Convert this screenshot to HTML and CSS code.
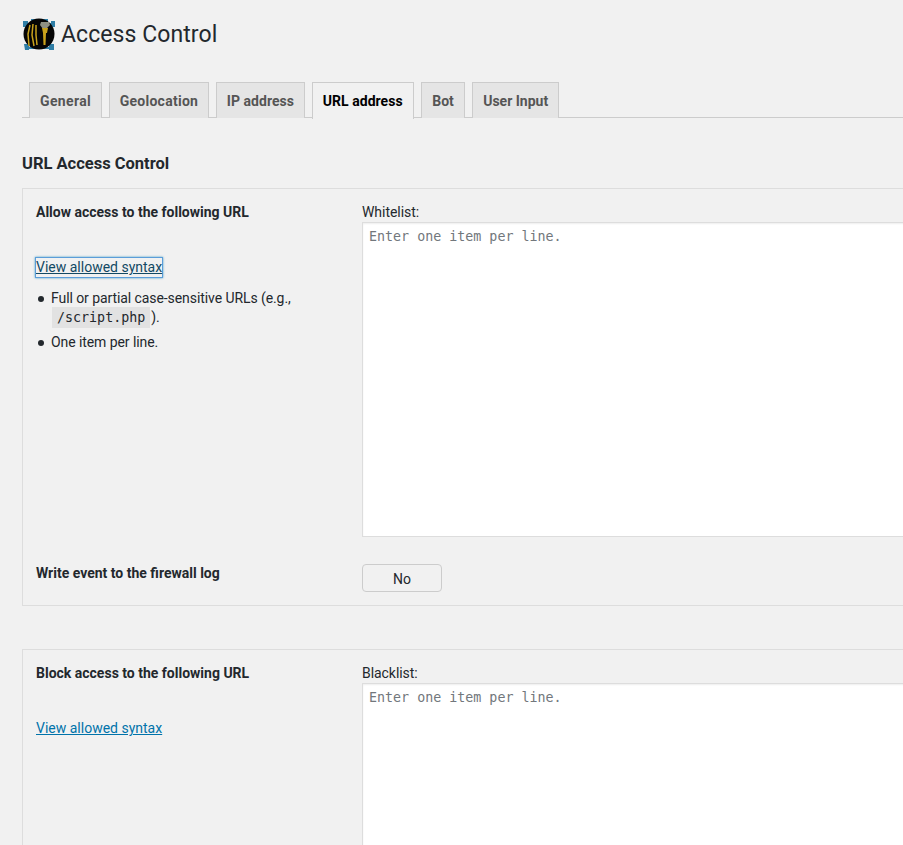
FILE: index.html
```html
<!DOCTYPE html>
<html lang="en">
<head>
    <meta charset="UTF-8">
    <title>Access Control</title>
    <link rel="stylesheet" href="styles.css">
</head>
<body>
    <div class="wrap">
        <h1 class="page-title">
            <svg class="logo" width="34" height="34" viewBox="0 0 34 34">
                <path d="M1 4h5v2h3V2h17v4h3V4h4v6h-4V8H5v2H1zM2 27h5v3h20v-3h5v6h-5v-1H7v1H3z" fill="#2f7ea6"/>
                <circle cx="17" cy="17" r="15.500" fill="#050505"/>
                <path d="M19 5h8l1 3-4 4h-3l-3-4z" fill="#8f9183"/>
                <path d="M20 11h6l-1 5h-1l-.5 12h-2L21 16z" fill="#c9a21c"/>
                <path d="M8 8l-2 9 1 12M11 7l-1 11 2 11M14 8v10l1 10" fill="none" stroke="#c9a21c" stroke-width="1.500"/>
            </svg>
            Access Control
        </h1>

        <nav class="tabs">
            <a class="tab tab-general">General</a>
            <a class="tab tab-geo">Geolocation</a>
            <a class="tab tab-ip">IP address</a>
            <a class="tab active">URL address</a>
            <a class="tab tab-bot">Bot</a>
            <a class="tab">User Input</a>
        </nav>

        <h2 class="section-title">URL Access Control</h2>

        <section class="panel">
            <div class="row">
                <div class="col-left">
                    <h3 class="label">Allow access to the following URL</h3>
                    <a class="syntax-link focused">View allowed syntax</a>
                    <ul class="syntax-list">
                        <li>Full or partial case-sensitive URLs (e.g., <code>/script.php</code>).</li>
                        <li>One item per line.</li>
                    </ul>
                </div>
                <div class="col-right">
                    <label class="field-label" for="whitelist">Whitelist:</label>
                    <textarea class="list-input" id="whitelist" placeholder="Enter one item per line."></textarea>
                </div>
            </div>
            <div class="row log-row">
                <div class="col-left">
                    <h3 class="label">Write event to the firewall log</h3>
                </div>
                <div class="col-right">
                    <button class="toggle" type="button">No</button>
                </div>
            </div>
        </section>

        <section class="panel">
            <div class="row">
                <div class="col-left">
                    <h3 class="label">Block access to the following URL</h3>
                    <a class="syntax-link">View allowed syntax</a>
                </div>
                <div class="col-right">
                    <label class="field-label" for="blacklist">Blacklist:</label>
                    <textarea class="list-input" id="blacklist" placeholder="Enter one item per line."></textarea>
                </div>
            </div>
        </section>
    </div>
</body>
</html>
```

FILE: styles.css
```css
html, body {
    height: 845px;
    overflow: hidden;
}
body {
    margin: 0;
    background: #f1f1f1;
    color: #23282d;
    font-family: Roboto, sans-serif;
    font-size: 14px;
}
.wrap {
    width: 1100px;
    padding-left: 22px;
}
.page-title {
    display: flex;
    align-items: center;
    gap: 5px;
    height: 34px;
    margin: 0;
    padding-top: 17px;
    font-size: 23px;
    font-weight: 400;
    letter-spacing: .07px;
}
.logo {
    flex: none;
}
.tabs {
    display: flex;
    gap: 6.6px;
    height: 35px;
    margin-top: 31px;
    padding-left: 7px;
    border-bottom: 1px solid #ccc;
}
.tab {
    height: 35px;
    padding: 0 10px;
    border: 1px solid #ccc;
    border-bottom: none;
    background: #e5e5e5;
    color: #555;
    font-weight: 700;
    line-height: 36px;
}
.tab.active {
    height: 36px;
    background: #f1f1f1;
    color: #000;
    letter-spacing: .05px;
}
.tab-general {
    letter-spacing: .35px;
}
.tab-geo {
    letter-spacing: .27px;
}
.tab-ip {
    letter-spacing: .05px;
}
.tab-bot {
    margin: 0 1px;
    letter-spacing: -.1px;
}
.section-title {
    margin: 36px 0 0;
    font-size: 16.5px;
    font-weight: 700;
    line-height: 20px;
}
.panel {
    margin-top: 14px;
    padding: 13px;
    border: 1px solid #ddd;
}
.panel + .panel {
    margin-top: 43px;
    height: 400px;
}
.row {
    display: flex;
}
.col-left {
    flex: none;
    width: 326px;
}
.col-right {
    flex: 1;
}
.label {
    margin: 0;
    font-size: 14px;
    font-weight: 700;
    line-height: 20px;
}
.syntax-link {
    display: inline-block;
    margin-top: 36px;
    color: #0073aa;
    line-height: 19px;
    text-decoration: underline;
}
.syntax-link.focused {
    color: #124964;
    box-shadow: 0 0 0 1px #5b9dd9, 0 0 2px 1px rgba(30, 140, 190, .8);
}
.syntax-list {
    margin: 12px 0 0;
    padding-left: 15px;
    list-style: none;
    letter-spacing: -.08px;
    line-height: 19px;
}
.syntax-list li {
    position: relative;
    margin-bottom: 6px;
}
.syntax-list li::before {
    content: "";
    position: absolute;
    left: -13px;
    top: 7px;
    width: 6px;
    height: 6px;
    border-radius: 50%;
    background: #23282d;
}
code {
    margin: 0 1px;
    padding: 3px 5px;
    background: #e2e2e2;
    font-family: "DejaVu Sans Mono", monospace;
    font-size: 13.33px;
    letter-spacing: 0;
}
.field-label {
    display: block;
    margin: 1px 0;
    letter-spacing: -.05px;
    line-height: 18px;
}
.list-input {
    display: block;
    box-sizing: border-box;
    width: 100%;
    height: 315px;
    padding: 5px 6px;
    border: 1px solid #ddd;
    border-radius: 0;
    box-shadow: inset 0 1px 2px rgba(0, 0, 0, .07);
    background: #fff;
    font-family: "DejaVu Sans Mono", monospace;
    font-size: 13.33px;
    line-height: 18px;
    resize: none;
}
.list-input::placeholder {
    color: #72777c;
    opacity: 1;
}
.log-row {
    margin-top: 27px;
}
.log-row .label {
    margin-top: -1px;
}
.toggle {
    display: block;
    width: 80px;
    height: 28px;
    padding: 1px 0 0;
    border: 1px solid #ccc;
    border-radius: 4px;
    background: #f1f1f1;
    color: #23282d;
    font-family: Roboto, sans-serif;
    font-size: 14px;
}
```
